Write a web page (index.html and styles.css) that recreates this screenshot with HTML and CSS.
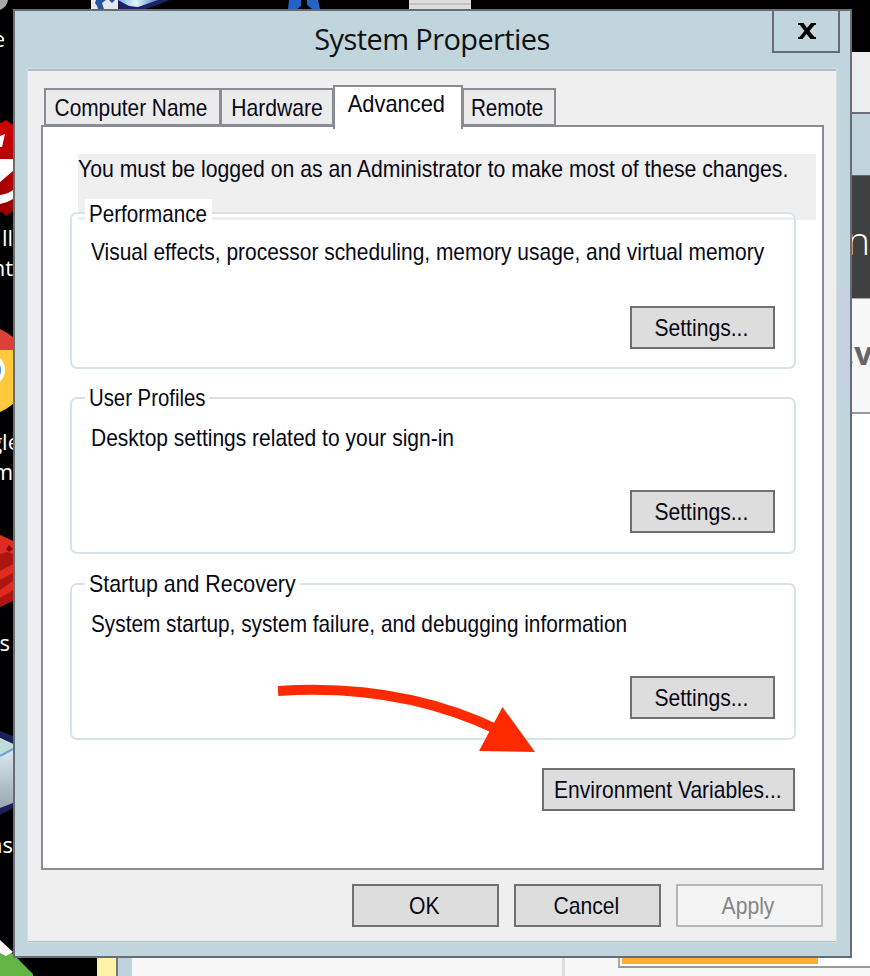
FILE: index.html
```html
<!DOCTYPE html>
<html lang="en">
<head>
<meta charset="utf-8">
<title>System Properties</title>
<link rel="stylesheet" href="styles.css">
</head>
<body>
<div class="desktop">
  <svg class="icons" width="870" height="976" viewBox="0 0 870 976" aria-hidden="true">
    <defs>
      <linearGradient id="glass" x1="0" y1="0" x2="1" y2="0"><stop offset="0" stop-color="#7db4ee"/><stop offset=".45" stop-color="#e4f5fa"/><stop offset="1" stop-color="#4b80cc"/></linearGradient>
      <linearGradient id="cube" x1="0" y1="0" x2="0" y2="1"><stop offset="0" stop-color="#e8f4fb"/><stop offset="1" stop-color="#98a8b0"/></linearGradient>
      <linearGradient id="seal" x1="0" y1="0" x2="0" y2="1"><stop offset="0" stop-color="#d00000"/><stop offset="1" stop-color="#970000"/></linearGradient>
    </defs>
    <path d="M0 0H8Q7 7 0 10Z" fill="#a9a9a9"/>
    <path d="M91 0H118V9H91Z" fill="#e6e8ee"/>
    <path d="M96 0H106L102 3L104 9H98Q97 5 95 3ZM109 0H115L112 3Z" fill="#2158a5"/>
    <path d="M118 0H170L146 9H118Z" fill="#1b2365"/>
    <path d="M118 0H158L138 7L129 6Z" fill="url(#glass)"/>
    <path d="M289 0H301V6L297 9H288ZM307 0H318L320 9H312L307 5Z" fill="#2463c9"/>
    <path d="M409 0H471V9H409Z" fill="#dedee0"/>
    <path d="M409 4H471" stroke="#aaa" />
    <path d="M0 123L3 122L6 120L10 123L13 125V211L9 214L6 216L3 213L0 212Z" fill="url(#seal)"/>
    <path d="M0 136L5 134L2 147H0ZM0 159H13V171L0 182ZM0 195Q8 194 13 190V199Q7 203 0 204Z" fill="#fff"/>
    <path d="M0 329Q8 333 13 337V351H0Z" fill="#da4237"/>
    <path d="M0 350H13V404Q7 409 0 412Z" fill="#ffc83d"/>
    <circle cx="-12" cy="370" r="17" fill="#fff"/><circle cx="-12" cy="370" r="13" fill="#4a88e9"/>
    <path d="M0 535L13 541V601L0 607Z" fill="#ad1610"/>
    <path d="M0 535L13 541V554L7 552L0 554ZM0 571L13 564V573L0 580ZM0 590L13 581V590L0 598Z" fill="#df2b20"/>
    <path d="M6 549L9 545L13 549L9 552Z" fill="#7d0c08"/>
    <path d="M0 731L13 736V808L0 815Z" fill="#1b2058"/>
    <path d="M0 738L13 744V803L0 808Z" fill="url(#cube)"/>
    <path d="M0 738L13 744V750L0 756Z" fill="#c0dcd9"/><path d="M0 756L13 749" stroke="#68a9d8" stroke-width="2"/>
    <path d="M0 942L15 956L33 974V976H0Z" fill="#63b545"/>
    <path d="M0 940L13 952L6 956L0 953Z" fill="#fff"/>
    <path d="M9 958L32 974V976H0V962Z" fill="#63b545"/>
  </svg>
  <div class="edge-label l1">e</div>
  <div class="edge-label l2">ll<br>nt</div>
  <div class="edge-label l3">gle</div>
  <div class="edge-label l3b">m</div>
  <div class="edge-label l4">es</div>
  <div class="edge-label l5">ns</div>

  <div class="back-window">
    <div class="back-top"></div>
    <div class="back-title"></div>
    <div class="back-dark"><span>n</span></div>
    <div class="back-tab"><span>.v</span></div>
    <div class="back-page"></div>
  </div>
  <div class="lower-window">
    <div class="folder"></div>
    <div class="frame"></div>
    <div class="sheet"></div>
    <div class="list"><div class="box"><div class="orange"></div></div></div>
  </div>

  <section class="dialog">
    <header class="titlebar"><h1>System Properties</h1></header>
    <button class="close" aria-label="Close"><svg width="20" height="18" viewBox="0 0 20 18"><path d="M1 1H6.500L10 6L14 1H19V3H17.500L12.500 9L17.500 15H19V17H13.500L9.500 12L5.500 17H1V15H2.500L7.500 9L3 3H1Z"/></svg></button>
    <main class="client">
      <nav class="tabs">
        <div class="tab name"><span>Computer Name</span></div>
        <div class="tab hardware"><span>Hardware</span></div>
        <div class="tab active"><span>Advanced</span></div>
        <div class="tab remote"><span>Remote</span></div>
      </nav>
      <div class="panel">
        <p class="notice"><span>You must be logged on as an Administrator to make most of these changes.</span></p>
        <section class="group first">
          <h2><span class="t-perf">Performance</span></h2>
          <p><span class="t-visual">Visual effects, processor scheduling, memory usage, and virtual memory</span></p>
          <button><span>Settings...</span></button>
        </section>
        <section class="group second">
          <h2><span class="t-user">User Profiles</span></h2>
          <p><span class="t-desktop">Desktop settings related to your sign-in</span></p>
          <button><span>Settings...</span></button>
        </section>
        <section class="group third">
          <h2><span class="t-startup">Startup and Recovery</span></h2>
          <p><span class="t-system">System startup, system failure, and debugging information</span></p>
          <button><span>Settings...</span></button>
        </section>
        <button class="environment"><span>Environment Variables...</span></button>
      </div>
      <footer class="actions">
        <button><span>OK</span></button>
        <button><span>Cancel</span></button>
        <button disabled><span>Apply</span></button>
      </footer>
    </main>
  </section>

  <svg class="arrow" width="260" height="80" viewBox="0 0 260 80" aria-hidden="true">
    <path d="M0 11Q122 3 220 50" fill="none" stroke="#ff2a00" stroke-width="10"/>
    <path d="M224.500 27L257 72L201 71Z" fill="#ff2a00"/>
  </svg>
</div>
</body>
</html>
```

FILE: styles.css
```css
* { box-sizing: border-box; }
body { margin: 0; overflow: hidden; font: 24px/30px "Liberation Sans", Arial, sans-serif; color: #080814; }
h1, h2, p { margin: 0; font-weight: 400; font-size: inherit; }
button { font: inherit; color: inherit; padding: 0; }
.desktop { position: relative; width: 870px; height: 976px; background: #000; overflow: hidden; }
.icons { position: absolute; inset: 0; }

.edge-label { position: absolute; right: 857px; color: #fff; font: 22px/30px "Open Sans", sans-serif; text-align: right; }
.l1 { top: 23px; right: 865px; }
.l2 { top: 222px; }
.l3 { top: 426px; right: 850px; }
.l3b { top: 456px; }
.l4 { top: 627px; right: 860px; }
.l5 { top: 829px; }

.back-window { position: absolute; left: 850px; top: 52px; width: 20px; height: 924px; display: flex; flex-direction: column; overflow: hidden; }
.back-top { height: 60px; background: #ededed; }
.back-title { height: 63px; border-top: 2px solid #6b6e76; background: #c0d4dc; }
.back-dark { height: 123px; background: #404040; color: #fff; border-top: 1px solid #666; font: 300 39px/40px "Open Sans", sans-serif; padding-top: 44px; }
.back-dark span { margin-left: -3px; }
.back-tab { height: 116px; background: #f7f7f7; border-top: 1px solid #aaa; border-bottom: 2px solid #999; color: #666; font: 700 32px/34px "Open Sans", sans-serif; padding-top: 37px; }
.back-tab span { margin-left: -5px; }
.back-page { flex: 1; background: #fff; }

.lower-window { position: absolute; left: 97px; top: 956px; width: 773px; height: 20px; display: flex; }
.folder { width: 21px; background: #fff3aa; border-right: 2px solid #777; }
.frame { width: 14px; background: #bfd3dc; }
.sheet { width: 433px; background: #f7f7f7; border-right: 3px solid #ddd; }
.list { flex: 1; background: #f7f7f7; padding-left: 53px; }
.box { height: 12px; background: #fff; border-left: 2px solid #aaa; border-bottom: 2px solid #999; padding-left: 2px; }
.orange { width: 196px; height: 8px; background: #ffad33; }

.dialog { position: absolute; left: 13px; top: 9px; width: 839px; height: 949px; border: 2px solid #686c74; background: linear-gradient(#c1d5dd 0 274px, #c5d1e2 284px 370px, #c1d5dd 390px) right / 14px 100% no-repeat #c1d5dd; padding: 0 14px 14px 13px; }
.titlebar { height: 58px; padding-top: 8px; text-align: center; }
.titlebar h1 { font: 29px/40px "Open Sans", sans-serif; letter-spacing: -.6px; color: #111; }
.close { position: absolute; right: 10px; top: -2px; width: 68px; height: 44px; border: 2px solid #686c74; background: #c1d5dd; display: grid; place-items: center; }
.close svg { margin-left: 2px; }
.client { height: 873px; background: #efefef; border-top: 2px solid #aebfc7; border-bottom: 1px solid #b2c1ca; box-shadow: 0 0 0 1px #d1dde1; padding: 14px 12px 0 13px; display: flex; flex-direction: column; }

.tab span, .notice span, .group span, .panel button span, .actions span { display: inline-block; transform: scaleX(.88); }
.tabs { display: flex; align-items: flex-end; height: 44px; padding-left: 3px; position: relative; z-index: 1; margin-bottom: -4px; }
.tab { height: 38px; margin-bottom: 3px; border: 2px solid #898c95; background: #ebebeb; display: flex; justify-content: center; line-height: 36px; white-space: nowrap; }
.name { width: 177px; }
.tab.name span { transform: scaleX(.868); margin-left: -3px; }
.hardware { width: 114px; margin-left: -1px; }
.active { width: 130px; height: 44px; margin: 0 -1px 0 -1px; background: #fff; border-bottom: 0; }
.tab.active span { transform: scaleX(.91); margin-left: -4px; margin-top: -1px; }
.remote { width: 94px; }
.tab.remote span { transform: scaleX(.86); margin-left: -4px; }
.panel { width: 783px; height: 745px; border: 2px solid #898c95; background: #fff; padding: 27px 6px 0 27px; display: flex; flex-direction: column; }
.notice { height: 66px; width: 738px; margin-left: 8px; background: #efefef; white-space: nowrap; flex: none; }
.panel .notice span, .panel .group p span, .panel .group h2 span { transform-origin: left; }
.panel .notice span { transform: scaleX(.884); }
.group { position: relative; flex: none; width: 726px; height: 157px; border: 2px solid #d9e2e9; border-radius: 7px; padding: 23px 19px 0 19px; display: flex; flex-direction: column; align-items: flex-end; }
.group h2 { position: absolute; left: 13px; top: -16px; height: 30px; width: 127px; padding: 0 4px; background: #fff; white-space: nowrap; }
.first h2 { top: -15px; }
.second h2 { width: 124px; }
.third h2 { width: 215px; }
.group .t-perf { transform: scaleX(.858); }
.group .t-user { transform: scaleX(.848); }
.group .t-startup { transform: scaleX(.89); }
.group .t-visual { transform: scaleX(.8725); }
.group .t-desktop { transform: scaleX(.875); }
.group .t-system { transform: scaleX(.866); }
.group p { align-self: flex-start; white-space: nowrap; }
.group button { margin-top: 38px; width: 145px; height: 43px; }
.group button span { margin-left: -3px; }
.first { margin-top: -8px; margin-bottom: 1px; background: linear-gradient(#fff 0 3px, #efefef 3px 6px, #fff 6px) 6px 0 no-repeat #fff; background-clip: padding-box; }
.first p { margin-top: 0; }
.first button { margin-top: 39px; }
.second { margin-top: 27px; }
.third { margin-top: 29px; }
.second p, .third p { position: relative; top: 1px; }
.group + .environment { align-self: flex-end; margin: 28px 21px 0 0; width: 253px; height: 43px; }
.panel button, .actions button { border: 2px solid #707070; background: #ddd; white-space: nowrap; display: flex; justify-content: center; align-items: center; }
.panel .environment span { transform: scaleX(.876); margin-left: -2px; }
.actions { display: flex; gap: 15px; padding: 14px 1px 0 0; justify-content: flex-end; }
.actions button { width: 147px; height: 43px; }
.actions button span { margin-left: -2px; }
.actions button:disabled { background: #f4f4f4; border-color: #b4b8bc; color: #858585; }
.arrow { position: absolute; left: 278px; top: 680px; }
```
